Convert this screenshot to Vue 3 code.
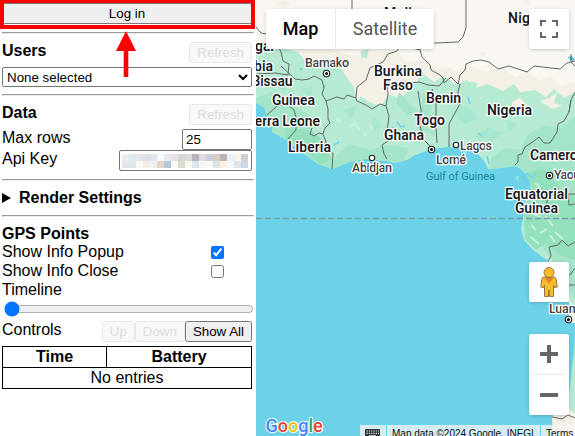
<script setup>
import { ref } from 'vue'

const maxRows = ref('25')
const popup = ref(true)
const close = ref(false)
const timeline = ref(0)

const keyMosaic = [
  '#f0eeec', '#d8ecee', '#e8e8ec', '#dbdfe9', '#e0e3ea', '#f7fafd', '#e8e8ee', '#e9e2df', '#d4d7da',
  '#d9dcd7', '#bab3b9', '#dedce2', '#c8cddf', '#dacdc1', '#bab2b5', '#eaf0f5', '#faf4ee', '#d7cfca',
  '#e3e5ea', '#dfe5e8', '#f8faf7', '#f5ece5', '#eff0f5', '#e6d5c8', '#b6c4d8', '#f5f9fa', '#d9ddd0',
  '#faf8ef', '#d9e6ec', '#f3f8f7', '#faf9f3', '#dce4e6', '#fcf0df', '#f3f7f9', '#dfe4e9', '#c9d9ea',
]

const countries = [
  { t: 'Mali', x: 384, y: 18, w: 28 },
  { t: 'Niger', x: 508, y: 23, w: 35 },
  { t: 'Senegal', x: 274, y: 51, w: 50, a: 'end' },
  { t: 'Gambia', x: 273, y: 71, w: 48, a: 'end' },
  { t: 'Bissau', x: 292.5, y: 86, w: 41, a: 'end' },
  { t: 'Burkina', x: 374, y: 76, w: 48 },
  { t: 'Faso', x: 383, y: 90, w: 30 },
  { t: 'Guinea', x: 272, y: 105, w: 43 },
  { t: 'Sierra Leone', x: 320, y: 126, w: 77, a: 'end' },
  { t: 'Liberia', x: 288, y: 152, w: 43 },
  { t: 'Ghana', x: 384, y: 140, w: 40 },
  { t: 'Togo', x: 414, y: 125, w: 31 },
  { t: 'Benin', x: 426, y: 103, w: 35 },
  { t: 'Nigeria', x: 487, y: 115, w: 45 },
  { t: 'Cameroon', x: 530, y: 160, w: 63 },
  { t: 'Equatorial', x: 505, y: 199, w: 63 },
  { t: 'Guinea', x: 515, y: 213, w: 43 },
]
const cities = [
  { t: 'Bamako', x: 305, y: 67, w: 44 },
  { t: 'Abidjan', x: 352, y: 172, w: 40 },
  { t: 'Lagos', x: 460, y: 150, w: 32 },
  { t: 'Lomé', x: 436, y: 164, w: 30 },
  { t: 'Yaoundé', x: 554, y: 179, w: 45 },
  { t: 'Luanda', x: 549, y: 313, w: 40 },
]
const capitals = [[326.5, 73.5], [431.5, 149.5], [549.5, 175.5], [568.5, 319.5]]
const ports = [[372, 158], [456, 145]]

const borders = [
  'M256 27L261 33 267 34 276 42 281 52 283 61 289 64 288 75 275 73 256 74',
  'M352 0V10L357 20',
  'M281 66L295 79 302 80 309 79 314 76 322 80 324 88 322 94 326 101 337 97 344 99 347 95 356 98 357 87 366 80 370 68 383 62 388 54 397 51 401 45 420 50',
  'M356 98L357 101 366 105 372 109 380 104 386 106 388 94 387 83 399 84 419 82 428 85 439 86 446 78',
  'M326 101L328 109 328 119 330 123 325 128 323 134 319 133 314 136 310 134 312 128',
  'M323 134L326 142 323 150 333 153 332 169',
  'M288 139L296 130 296 117 294 110 287 104 277 106 267 115',
  'M386 106L389 116 387 132 388 141 382 145 384 154 387 159',
  'M418 91L421 110 420 126 424 140 430 146',
  'M432 89L436 104 436 128 437 143',
  'M449 147V124L456 111 460 104 458 92 460 84',
  'M466 0V28L463 37 458 42 435 43 424 42 420 50 422 57 430 65 431 70 440 75 443 78 444 83 451 77 458 84 460 75 465 70 466 64 473 61 481 60 489 62 498 69 509 66 527 72 534 66 560 69 567 63 575 61',
  'M571 54L571 62 575 66',
  'M575 92L571 100 569 112',
  'M571 100L569 112 564 121 558 124 557 132 550 143 544 143 539 137 534 141 525 147 522 154 518 155 518 162 515 165',
  'M526 208H547V194H575M568 194L569 205 575 204',
  'M548 261L551 256 549 247 558 245 562 240 568 246 575 242M563 275L570 275 575 268M569 285H575',
  'M552 417L562 419 568 415 575 418',
]
</script>

<template>
  <div class="page">
    <aside class="side">
      <button class="login">Log in</button>
      <hr />
      <div class="row head"><b>Users</b><button disabled>Refresh</button></div>
      <select class="users"><option>None selected</option></select>
      <hr />
      <div class="row head"><b>Data</b><button disabled>Refresh</button></div>
      <div class="row field"><span>Max rows</span><input v-model="maxRows" class="rows" type="text" /></div>
      <div class="row key-row">
        <span>Api Key</span>
        <div class="key"><i v-for="(c, i) in keyMosaic" :key="i" :style="{ background: c }"></i></div>
      </div>
      <hr />
      <div class="summary">
        <svg width="9" height="10" viewBox="0 0 9 10"><path d="M0 0L9 5L0 10Z" /></svg>
        <b>Render Settings</b>
      </div>
      <hr />
      <div class="line first"><b>GPS Points</b></div>
      <label class="line check"><span>Show Info Popup</span><input v-model="popup" type="checkbox" /></label>
      <label class="line check"><span>Show Info Close</span><input v-model="close" type="checkbox" /></label>
      <div class="line">Timeline</div>
      <input v-model="timeline" class="slider" type="range" min="0" max="100" />
      <div class="row controls">
        <span>Controls</span>
        <div class="group"><button disabled>Up</button><button disabled>Down</button><button>Show All</button></div>
      </div>
      <table>
        <tbody>
          <tr><th class="time">Time</th><th>Battery</th></tr>
          <tr><td colspan="2">No entries</td></tr>
        </tbody>
      </table>
    </aside>

    <main class="map">
      <svg class="canvas" width="319" height="436" viewBox="256 0 319 436">
        <defs>
          <clipPath id="land">
            <path d="M256 0H575V338L574 353 572 367 570 387 560 407 552 417 553 436H575V323L569 323 570 305 562 285 557 273 547 260 533 250 524 240 521 229 523 218 526 207 525 199 530 190 530 180 525 173 520 168 514 166 502 168 488 169 484 161 478 154 470 149 448 147 432 149 415 155 407 160 395 163 387 161 365 159 350 162 332 169 318 164 303 153 287 140 272 132 273 123 267 115 264 107 256 103Z" />
          </clipPath>
        </defs>
        <rect x="256" width="319" height="436" fill="#6bd2e8" />
        <g clip-path="url(#land)">
          <rect x="256" width="319" height="436" fill="#b7ead3" />
          <path fill="#f5f0e5" d="M256 0H575V92L564 98 554 89 546 97 535 90 520 92 514 84 503 91 488 84 477 87 467 80 455 85 444 76 434 82 422 73 417 82 407 92 400 99 389 94 381 106 369 102 361 96 357 103 354 87 345 75 338 61 326 58 317 66 306 62 298 52 280 47 256 49Z" />
          <path fill="#faf7f3" d="M256 0H575V82L561 86 550 76 540 80 527 72 515 77 502 68 485 72 470 65 458 72 445 66 438 68 421 60 406 62 398 51 378 53 350 55 330 49 300 50 256 45Z" />
          <path fill="#f5f0e5" d="M480 52L486 51 485 56 480 56ZM272 3L285 0 292 5 283 8ZM523 0H528L530 5 526 4ZM512 102L520 98 528 106 524 111 512 109ZM540 101L549 98 557 93 554 103 562 106 552 109Z" />
          <path fill="#a4e5c9" d="M256 98L271 92 289 101 302 111 319 121 308 132 326 143 332 160 349 144 370 150 388 145 409 148 401 165 330 172 285 142 256 120ZM423 93L432 100 429 120 435 135 418 130ZM491 158L505 148 520 150 528 134 544 125 560 128 575 116V300L560 270 540 244 528 226 528 180 510 166 488 171ZM399 92L409 103 418 111 407 116 396 102Z" />
          <path fill="#92e0bc" d="M286 128L309 130 324 140 331 160 320 164 304 149 285 139ZM527 174L541 167 551 175 564 192 575 195V260L560 255 546 243 536 250 525 239 524 210 532 190Z" />
          <path fill="#a8e7cf" d="M275 83L288 79 285 93ZM302 89L313 86 310 98ZM343 110L357 106 351 119ZM372 117L383 124 374 132ZM452 112L465 106 480 117 465 124ZM475 137L488 127 503 133 493 141ZM505 119L517 124 510 131Z" />
          <path fill="none" stroke="#c9f0df" stroke-width="2" d="M337 119L341 123M349 127L354 124 360 129M369 124L372 129M366 132L365 137M531 225L536 230M540 233L547 229M533 214L541 217M545 216L553 226M555 232L563 239M531 237L539 244M550 235L555 242M535 183L540 187" />
          <path fill="#f5f0e5" d="M364 49L374 58 367 64ZM557 264L567 280 570 300 575 310V330L564 303ZM550 412L566 405 575 414V436H552Z" />
          <path fill="#b7ead3" d="M361 51L369 49 367 58 361 57ZM398 84L406 79 408 90ZM421 80L427 77 433 82 426 87ZM471 81L478 84 474 89ZM480 89L488 86 484 93ZM340 91L350 92 343 98Z" />
        </g>
        <path fill="none" stroke="#6bd2e8" stroke-width="1.5" d="M323 88L325 85M300 70L302 68M334 145L339 142M397 122L401 127 405 126M468 97L470 104M392 127L397 131M478 133L482 136M526 173L533 178M532 178L536 173M487 156L489 164" />
        <path fill="#40c5df" d="M568 57L572 56 575 60 571 61Z" />
        <path fill="#9fe3c5" d="M515 178L519 175 518 181ZM491 217L495 215 494 218Z" />
        <path v-for="(b, i) in borders" :key="i" :d="b" class="border" />
        <path d="M256 218.5H575" stroke="#789da7" stroke-width="1.4" stroke-dasharray="6 3" />
        <g class="mark">
          <circle v-for="(p, i) in ports" :key="i" :cx="p[0]" :cy="p[1]" r="2.7" />
          <g v-for="(p, i) in capitals" :key="'c' + i">
            <circle :cx="p[0]" :cy="p[1]" r="3.2" /><circle :cx="p[0]" :cy="p[1]" r="1.6" class="dot" />
          </g>
        </g>
        <text x="426" y="180" textLength="69" class="gulf">Gulf of Guinea</text>
        <text v-for="c in cities" :key="c.t" :x="c.x" :y="c.y" :textLength="c.w" class="city">{{ c.t }}</text>
        <text v-for="(c, i) in countries" :key="i" :x="c.x" :y="c.y" :textLength="c.w" :text-anchor="c.a || 'start'" class="country">{{ c.t }}</text>
        <text x="265.5" y="431.5" class="logo"><tspan fill="#4285f4">G</tspan><tspan fill="#ea4335">o</tspan><tspan fill="#fbbc04">o</tspan><tspan fill="#4285f4">g</tspan><tspan fill="#34a853">l</tspan><tspan fill="#ea4335">e</tspan></text>
      </svg>

      <div class="types"><div class="on">Map</div><div>Satellite</div></div>
      <div class="tile full">
        <svg width="18" height="18" viewBox="0 0 18 18"><path d="M0 0H6V2H2V6H0ZM12 0H18V6H16V2H12ZM0 12H2V16H6V18H0ZM16 12H18V18H12V16H16Z" fill="#666" /></svg>
      </div>
      <div class="tile peg">
        <svg width="20" height="32" viewBox="0 0 20 32">
          <path d="M5 11H15Q17 11 17.3 14L18.2 21 15.4 21.5 14.5 19V30.5H10.7L10 24 9.3 30.5H5.5V19L4.6 21.5 1.8 21 2.7 14Q3 11 5 11Z" fill="#fbbc2b" stroke="#927447" stroke-width="1" />
          <path d="M5.5 12H14.5L10 18Z" fill="#e8832c" />
          <circle cx="10" cy="6.5" r="5" fill="#fbbc2b" stroke="#927447" />
        </svg>
      </div>
      <div class="zoom">
        <div><svg width="18" height="18" viewBox="0 0 18 18"><path d="M7 0H11V7H18V11H11V18H7V11H0V7H7Z" fill="#666" /></svg></div>
        <i></i>
        <div><svg width="18" height="4"><rect width="18" height="4" fill="#666" /></svg></div>
      </div>
      <div class="legal">
        <span class="keys">
          <svg width="15" height="9" viewBox="0 0 15 9">
            <rect width="15" height="9" rx="1" fill="#333" />
            <path d="M1.5 2H14M1.5 4.3H14" stroke="#dce9ec" stroke-width="1.2" stroke-dasharray="1.3 1" />
            <path d="M4 6.8H11" stroke="#dce9ec" stroke-width="1.2" />
          </svg>
        </span>
        <span class="data">Map data ©2024 Google, INEGI</span>
        <span class="terms">Terms</span>
      </div>
    </main>

    <div class="highlight"></div>
    <svg class="arrow" width="20" height="46" viewBox="0 0 20 46"><path d="M10 0L20 20H12.3V46H7.7V20H0Z" fill="#f00" /></svg>
  </div>
</template>

<style>
body {
  margin: 0;
  overflow: hidden;
}
</style>

<style scoped>
.page {
  position: relative;
  display: flex;
  width: 575px;
  height: 436px;
  overflow: hidden;
  background: #fff;
  color: #000;
  font: 16px/19px "Liberation Sans", Arial, sans-serif;
}
.side {
  box-sizing: border-box;
  width: 256px;
  flex: none;
  display: flex;
  flex-direction: column;
  padding: 3px 4px 0 2px;
}
button,
select,
.rows {
  box-sizing: border-box;
  margin: 0;
  height: 21px;
  font: 13.333px "Liberation Sans", Arial, sans-serif;
}
button:disabled {
  padding: 1px 7px;
  border: 1px solid #e8e8e8;
  border-radius: 3px;
  background: #f8f8f8;
  color: #dcdcdc;
}
hr {
  box-sizing: border-box;
  width: 252px;
  height: 2px;
  margin: 8px 0;
}
.row {
  display: flex;
  justify-content: space-between;
  height: 21px;
}
.head {
  line-height: 17px;
}
.users {
  height: 20px;
  margin-top: 4px;
  margin-bottom: -1px;
  padding: 0;
}
.field {
  margin-top: 4px;
}
.rows {
  width: 70px;
  padding: 1px 2px;
}
.row > span {
  line-height: 17px;
}
.key {
  box-sizing: border-box;
  display: grid;
  grid-template-columns: repeat(18, 7px);
  grid-template-rows: 7px 7px;
  width: 133px;
  height: 21px;
  padding: 3px 2px 2px;
  border: 1px solid #767676;
  border-radius: 2px;
}
.summary {
  display: flex;
  align-items: flex-start;
  gap: 8px;
  height: 18px;
  line-height: 17px;
}
.summary svg {
  margin-top: 4px;
}
.line {
  height: 19px;
  line-height: 19px;
}
.first {
  height: 17px;
  line-height: 17px;
}
.check {
  display: flex;
  justify-content: space-between;
  align-items: center;
}
.check input {
  width: 13px;
  height: 13px;
  margin: 2px 28px 0 0;
}
.slider {
  width: 250px;
  height: 16px;
  margin: 2px 0 4px 2px;
}
.group {
  display: flex;
}
table {
  width: 250px;
  margin-top: 4px;
  border-collapse: collapse;
  table-layout: fixed;
}
th,
td {
  height: 20px;
  padding: 0;
  border: 1px solid #000;
  text-align: center;
  line-height: 18px;
}
.time {
  width: 103px;
}
.map {
  position: relative;
  flex: none;
  width: 319px;
  height: 436px;
  overflow: hidden;
  font-family: Roboto, sans-serif;
}
.canvas {
  display: block;
}
.border {
  fill: none;
  stroke: #626967;
  stroke-width: 1;
  stroke-linejoin: round;
}
.canvas text {
  paint-order: stroke;
  stroke: #fff;
  stroke-width: 2.5px;
  stroke-linejoin: round;
}
.country {
  font-size: 14px;
  font-weight: 600;
  fill: #17191c;
}
.city {
  font-size: 12.5px;
  font-weight: 500;
  fill: #3c4043;
}
.canvas .gulf {
  font-size: 11px;
  fill: #17879b;
  stroke: none;
}
.canvas .logo {
  font: 500 18px Roboto, sans-serif;
  stroke-width: 2px;
}
.mark circle {
  fill: #fff;
  stroke: #222;
  stroke-width: 1.1;
}
.mark .dot {
  fill: #111;
  stroke: none;
}
.types,
.tile,
.zoom {
  position: absolute;
  background: #fff;
  border-radius: 2px;
  box-shadow: 0 1px 4px -1px rgba(0, 0, 0, 0.3);
}
.types {
  left: 10px;
  top: 9px;
  display: flex;
  width: 168px;
  height: 40px;
  font-size: 18px;
  line-height: 40px;
  text-align: center;
  color: #565656;
}
.types div {
  flex: 1;
}
.types .on {
  flex: none;
  width: 69px;
  border-right: 1px solid #e8e8e8;
  color: #000;
  font-weight: 500;
}
.tile {
  left: 273px;
  display: grid;
  place-items: center;
  width: 40px;
  height: 40px;
}
.full {
  top: 9px;
}
.peg {
  top: 262px;
}
.zoom {
  left: 273px;
  top: 334px;
  display: flex;
  flex-direction: column;
  align-items: center;
  width: 40px;
  height: 81px;
}
.zoom div {
  display: grid;
  place-items: center;
  flex: 1;
}
.zoom i {
  width: 30px;
  height: 1px;
  background: #e6e6e6;
}
.legal {
  position: absolute;
  right: 0;
  bottom: 0;
  display: flex;
  gap: 1px;
  width: 215px;
  height: 11px;
  overflow: hidden;
  font: 10px/17px "Liberation Sans", Arial, sans-serif;
  color: #111;
  white-space: nowrap;
}
.legal span {
  background: rgba(245, 245, 245, 0.75);
}
.keys {
  box-sizing: border-box;
  width: 26px;
  padding: 4px 0 0 5px;
}
.keys svg {
  display: block;
}
.data {
  box-sizing: border-box;
  width: 153px;
  padding-left: 5px;
}
.terms {
  flex: 1;
  padding-left: 5px;
}
.highlight {
  position: absolute;
  left: 0;
  top: 0;
  box-sizing: border-box;
  width: 255px;
  height: 29px;
  border: solid #f00;
  border-width: 3px 4px 4px;
}
.arrow {
  position: absolute;
  left: 116px;
  top: 31px;
}
</style>
